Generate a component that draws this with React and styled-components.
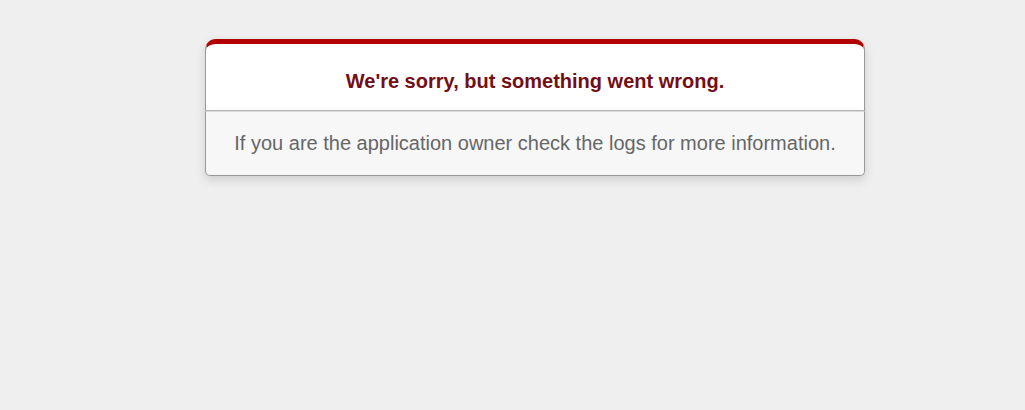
import styled, { createGlobalStyle } from "styled-components";

const GlobalStyle = createGlobalStyle`
    html, body {
        margin: 0;
        padding: 0;
    }
    body {
        background-color: #EFEFEF;
        color: #2E2F30;
        text-align: center;
        font-family: "Liberation Sans", Arial, sans-serif;
        font-size: 20px;
    }
`

const Page = styled.div`
    min-height: 410px;
    padding: 39px 0 0 205px;
    box-sizing: border-box;
`

const Dialog = styled.div`
    width: 660px;
`

const Header = styled.div`
    border: 1px solid #CCC;
    border-right-color: #999;
    border-left-color: #999;
    border-bottom-color: #BBB;
    border-top: #B00100 solid 5px;
    border-top-left-radius: 11px;
    border-top-right-radius: 11px;
    background-color: white;
    padding: 9px 12% 0;
    box-shadow: 0 4px 10px rgba(50, 50, 50, 0.17);
`

const Title = styled.h1`
    font-size: 20px;
    font-weight: 700;
    color: #730E15;
    line-height: 1.5em;
    margin: 13px 0 14px;
`

const Message = styled.p`
    margin: 0 0 1em;
    padding: 20px;
    background-color: #F7F7F7;
    border: 1px solid #CCC;
    border-right-color: #999;
    border-left-color: #999;
    border-bottom-color: #999;
    border-top-color: #DADADA;
    border-bottom-left-radius: 5px;
    border-bottom-right-radius: 5px;
    color: #666;
    line-height: 23px;
    box-shadow: 0 4px 10px rgba(50, 50, 50, 0.17);
`

const App = () => {
    return (
        <>
            <GlobalStyle />
            <Page>
                <Dialog>
                    <Header>
                        <Title>We're sorry, but something went wrong.</Title>
                    </Header>
                    <Message>If you are the application owner check the logs for more information.</Message>
                </Dialog>
            </Page>
        </>
    )
}

export default App;
